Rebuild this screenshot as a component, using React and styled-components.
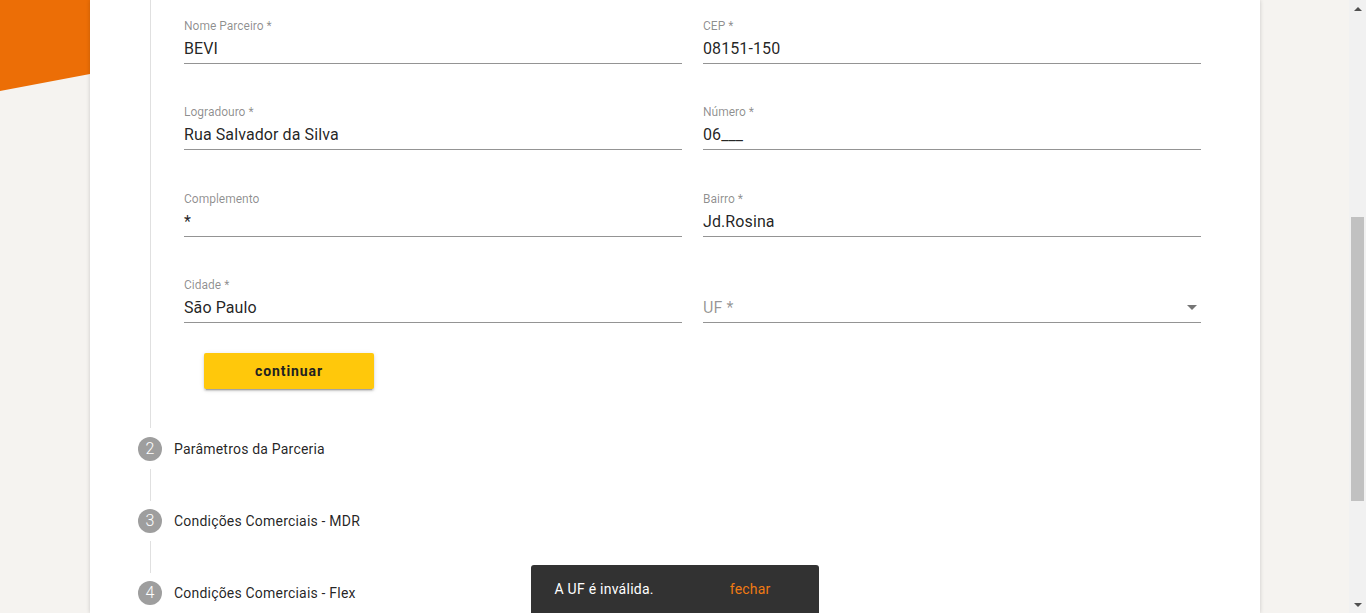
import React from 'react';
import styled, { createGlobalStyle } from 'styled-components';

// ==================== ESTILOS ====================
const GlobalStyle = createGlobalStyle`
  html, body {
    margin: 0;
    padding: 0;
    height: 100%;
    overflow: hidden;
  }

  body {
    font-family: Roboto, "Noto Sans", "Liberation Sans", sans-serif;
    background-color: #f5f3f0;
    color: rgba(0, 0, 0, 0.87);
  }
`;

const Page = styled.div`
  display: flex;
  height: 613px;
  background-color: #f5f3f0;
  overflow: hidden;
`;

const Gutter = styled.div`
  flex: 0 0 90px;
  width: 90px;

  svg {
    display: block;
  }
`;

const Card = styled.main`
  flex: 0 0 1170px;
  width: 1170px;
  background-color: #fff;
  box-shadow: 0 0 4px rgba(0, 0, 0, 0.18);
  position: relative;
  z-index: 1;
`;

const Filler = styled.div`
  flex: 1;
`;

const Scrollbar = styled.div`
  flex: 0 0 17px;
  width: 17px;
  display: flex;
  flex-direction: column;
  background-color: #f1f1f1;
`;

const ScrollArrow = styled.div`
  height: 17px;
  display: flex;
  align-items: center;
  justify-content: center;

  &::after {
    content: '';
    border-left: 4px solid transparent;
    border-right: 4px solid transparent;
    ${({ $up }) => ($up ? 'border-bottom: 4px solid #505050;' : 'border-top: 4px solid #505050;')}
  }
`;

const ScrollTrack = styled.div`
  flex: 1;
  display: flex;
  flex-direction: column;
  align-items: center;
`;

const ScrollThumb = styled.div`
  width: 13px;
  background-color: #c1c1c1;
`;

const Stepper = styled.div`
  padding-left: 48px;
`;

const StepContent = styled.div`
  margin-left: 12px;
  border-left: 1px solid #e0e0e0;
  padding: 19px 59px 39px 33px;
`;

const FormGrid = styled.div`
  display: grid;
  grid-template-columns: 1fr 1fr;
  column-gap: 21px;
  row-gap: 41.33px;
`;

const Field = styled.div`
  display: flex;
  flex-direction: column;
  border-bottom: 1px solid rgba(0, 0, 0, 0.42);
  padding-bottom: 4px;
  position: relative;
`;

const FieldLabel = styled.label`
  font-size: 12px;
  line-height: 14px;
  color: rgba(0, 0, 0, 0.45);
  margin-bottom: 6px;
`;

const FieldValue = styled.div`
  font-size: 16px;
  line-height: 20px;
  letter-spacing: 0.1px;
  color: ${({ $placeholder }) => ($placeholder ? 'rgba(0, 0, 0, 0.42)' : 'rgba(0, 0, 0, 0.87)')};
  display: flex;
  align-items: center;
  justify-content: space-between;
`;

const SelectArrow = styled.span`
  width: 0;
  height: 0;
  margin-right: 4px;
  border-left: 5px solid transparent;
  border-right: 5px solid transparent;
  border-top: 5px solid rgba(0, 0, 0, 0.54);
`;

const SubmitButton = styled.button`
  margin: 30px 0 0 20px;
  width: 170px;
  height: 36px;
  border: none;
  border-radius: 2px;
  background-color: #ffc80b;
  color: #212121;
  font-family: Roboto, "Liberation Sans", sans-serif;
  font-size: 14px;
  font-weight: 700;
  letter-spacing: 0.9px;
  cursor: pointer;
  box-shadow: 0 3px 1px -2px rgba(0, 0, 0, 0.2), 0 2px 2px 0 rgba(0, 0, 0, 0.14),
    0 1px 5px 0 rgba(0, 0, 0, 0.12);
`;

const StepHeader = styled.div`
  display: flex;
  align-items: center;
  height: 24px;
  margin-top: ${({ $first }) => ($first ? '9px' : '0')};
`;

const StepIcon = styled.span`
  width: 24px;
  height: 24px;
  border-radius: 50%;
  background-color: #9e9e9e;
  color: #fff;
  font-size: 16px;
  font-weight: 300;
  display: flex;
  align-items: center;
  justify-content: center;
`;

const StepLabel = styled.span`
  margin-left: 12px;
  font-size: 14px;
  letter-spacing: 0.2px;
  color: rgba(0, 0, 0, 0.87);
`;

const Connector = styled.div`
  margin: 8px 0 8px 12px;
  width: 1px;
  height: 32px;
  background-color: #e0e0e0;
`;

const SnackHolder = styled.div`
  position: fixed;
  left: 0;
  right: 17px;
  bottom: 0;
  display: flex;
  justify-content: center;
  pointer-events: none;
  z-index: 10;
`;

const Snackbar = styled.div`
  width: 288px;
  height: 48px;
  box-sizing: border-box;
  padding: 0 24px;
  border-radius: 3px 3px 0 0;
  background-color: #323232;
  display: flex;
  align-items: center;
  pointer-events: auto;
`;

const SnackMessage = styled.span`
  flex: 1;
  font-size: 14px;
  letter-spacing: 0.25px;
  color: #fff;
`;

const SnackAction = styled.button`
  background: none;
  border: none;
  padding: 0 24px 0 0;
  font-family: Roboto, "Liberation Sans", sans-serif;
  font-size: 14px;
  letter-spacing: 0.2px;
  color: #f07a12;
  cursor: pointer;
`;

// ==================== DADOS ====================
const fields = [
  { label: 'Nome Parceiro *', value: 'BEVI' },
  { label: 'CEP *', value: '08151-150' },
  { label: 'Logradouro *', value: 'Rua Salvador da Silva' },
  { label: 'Número *', value: '06___' },
  { label: 'Complemento', value: '*' },
  { label: 'Bairro *', value: 'Jd.Rosina' },
  { label: 'Cidade *', value: 'São Paulo' },
];

const steps = [
  { n: 2, label: 'Parâmetros da Parceria' },
  { n: 3, label: 'Condições Comerciais - MDR' },
  { n: 4, label: 'Condições Comerciais - Flex' },
];

// ==================== COMPONENTE ====================
const App = () => {
  return (
    <>
      <GlobalStyle />
      <Page>
        <Gutter>
          <svg width="90" height="100" viewBox="0 0 90 100">
            <polygon points="0,0 90,0 90,74 0,91" fill="#ec6e06" />
          </svg>
        </Gutter>

        <Card>
          <Stepper>
            <StepContent>
              <FormGrid>
                {fields.map((f) => (
                  <Field key={f.label}>
                    <FieldLabel>{f.label}</FieldLabel>
                    <FieldValue>{f.value}</FieldValue>
                  </Field>
                ))}
                <Field>
                  <FieldLabel>&nbsp;</FieldLabel>
                  <FieldValue $placeholder>
                    UF *
                    <SelectArrow />
                  </FieldValue>
                </Field>
              </FormGrid>
              <SubmitButton type="button">continuar</SubmitButton>
            </StepContent>

            {steps.map((s, i) => (
              <React.Fragment key={s.n}>
                {i > 0 && <Connector />}
                <StepHeader $first={i === 0}>
                  <StepIcon>{s.n}</StepIcon>
                  <StepLabel>{s.label}</StepLabel>
                </StepHeader>
              </React.Fragment>
            ))}
          </Stepper>
        </Card>

        <Filler />

        <Scrollbar>
          <ScrollArrow $up />
          <ScrollTrack>
            <ScrollThumb style={{ marginTop: 200, height: 284 }} />
          </ScrollTrack>
          <ScrollArrow />
        </Scrollbar>
      </Page>

      <SnackHolder>
        <Snackbar>
          <SnackMessage>A UF é inválida.</SnackMessage>
          <SnackAction type="button">fechar</SnackAction>
        </Snackbar>
      </SnackHolder>
    </>
  );
};

export default App;
